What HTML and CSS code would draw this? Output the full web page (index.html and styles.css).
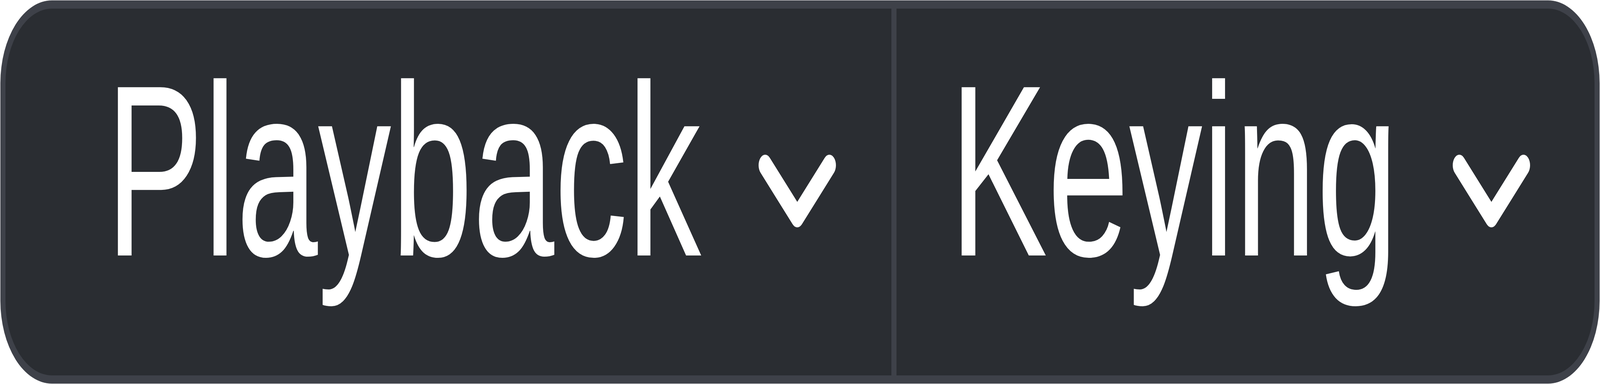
FILE: index.html
```html
<!DOCTYPE html>
<html lang="en">
<head>
<meta charset="utf-8">
<title>Mode selector</title>
<link rel="stylesheet" href="styles.css">
</head>
<body>
<div class="toolbar">
  <div class="cell cell-first">
    <div class="label-box label-box-playback"><span class="label">Playback</span></div>
    <svg class="chevron chevron-first" viewBox="0 0 318 187" preserveAspectRatio="none" width="198" height="187" aria-hidden="true"><polyline points="27,27 159,159 291,27"/></svg>
  </div>
  <div class="cell cell-second">
    <div class="label-box label-box-keying"><span class="label">Keying</span></div>
    <svg class="chevron chevron-second" viewBox="0 0 318 187" preserveAspectRatio="none" width="198" height="187" aria-hidden="true"><polyline points="27,27 159,159 291,27"/></svg>
  </div>
</div>
</body>
</html>
```

FILE: styles.css
```css
html, body {
  margin: 0;
  padding: 0;
  background: #ffffff;
  overflow: hidden;
}

/* Horizontal sizes are the reference's, fitted to the photographed
   window width (factor 0.6237); vertical sizes are unchanged. */
.toolbar {
  display: flex;
  box-sizing: border-box;
  margin: 1px;
  width: calc(100vw - 2px);
  height: 981px;
  border-style: solid;
  border-color: #3e4149;
  border-width: 21px 13px;
  border-radius: 132px / 212px;
  background: #2a2d32;
  overflow: hidden;
  font-family: "Liberation Sans", Arial, sans-serif;
  color: #ffffff;
}

.cell {
  display: flex;
  align-items: center;
}

.cell-first {
  padding-left: 257px;
  padding-right: 142px;
}

.cell-second {
  flex: 1;
  border-left: 13px solid #3e4149;
  padding-left: 136px;
}

.label-box {
  flex: none;
  height: 602px;
  padding-bottom: 92px;
}

.label-box-playback {
  width: 1523px;
}

.label-box-keying {
  width: 1148px;
}

.label {
  display: inline-block;
  font-size: 602px;
  line-height: 1;
  white-space: nowrap;
  transform: scaleX(0.6237) scaleY(1.04);
  transform-origin: 0 510px;
}

.chevron {
  display: block;
  flex: none;
  margin-bottom: 5px;
}

.chevron-first {
  margin-left: 148px;
}

.chevron-second {
  margin-left: 140px;
}

.chevron polyline {
  fill: none;
  stroke: #ffffff;
  stroke-width: 54;
  stroke-linecap: round;
  stroke-linejoin: round;
}
```
